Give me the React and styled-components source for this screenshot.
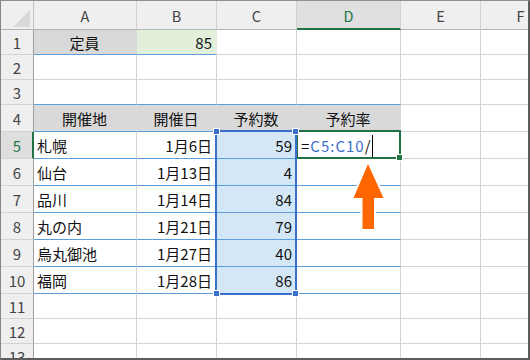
import React from "react";
import styled, { createGlobalStyle } from "styled-components";

const GlobalStyle = createGlobalStyle`
  html, body { margin: 0; padding: 0; background: #ffffff; }
  body { font-family: "Noto Sans CJK JP", "Noto Sans", sans-serif; }
`;

const GRID = "#d4d4d4";
const BLUE_LINE = "#5b9fdc";
const GREEN = "#217346";
const REF_BLUE = "#3a70cc";

const Frame = styled.div`
  width: 530px;
  height: 360px;
  box-sizing: border-box;
  border-top: 1px solid #8f8f8f;
  border-left: 1px solid #858585;
  border-right: 2px solid #5c5c5c;
  border-bottom: 2px solid #5c5c5c;
  overflow: hidden;
  background: #fff;
`;

const Sheet = styled.div`
  position: relative;
  display: grid;
  grid-template-columns: 33px 103px 80px 80px 104px 80px 80px;
  grid-template-rows: 29px 25px 25px 25px repeat(7, 27px) 25px 25px 25px;
  font-family: "Noto Sans CJK JP", "Noto Sans", sans-serif;
`;

const Corner = styled.div`
  position: relative;
  background: #efefef;
  border-right: 1px solid #c4c4c4;
  border-bottom: 1px solid #b4b4b4;
  box-sizing: border-box;
  svg { position: absolute; right: 3px; bottom: 2px; }
`;

const ColHeader = styled.div`
  box-sizing: border-box;
  display: flex;
  align-items: center;
  justify-content: center;
  background: ${(p) => (p.$active ? "#e0e0e0" : "#efefef")};
  border-right: 1px solid #d2d2d2;
  border-bottom: ${(p) => (p.$active ? `2px solid ${GREEN}` : "1px solid #b4b4b4")};
  color: ${(p) => (p.$active ? GREEN : "#444")};
  font-size: 14.5px;
  padding-top: ${(p) => (p.$active ? "1px" : "0")};
`;

const RowHeader = styled.div`
  box-sizing: border-box;
  display: flex;
  align-items: center;
  justify-content: center;
  background: ${(p) => (p.$active ? "#dedede" : "#efefef")};
  border-right: ${(p) => (p.$active ? `2px solid ${GREEN}` : "1px solid #9e9e9e")};
  border-bottom: 1px solid #d2d2d2;
  color: ${(p) => (p.$active ? GREEN : "#444")};
  font-size: 15px;
  padding-left: ${(p) => (p.$active ? "1px" : "0")};
`;

const Cell = styled.div`
  box-sizing: border-box;
  display: flex;
  align-items: center;
  justify-content: ${(p) =>
    p.$align === "right" ? "flex-end" : p.$align === "center" ? "center" : "flex-start"};
  padding: 1px 4px 0 3px;
  background: ${(p) => p.$bg || "#fff"};
  border-right: 1px solid ${(p) => p.$bg || GRID};
  border-bottom: 1px solid ${(p) => (p.$blue ? BLUE_LINE : p.$bg || GRID)};
  font-size: 15px;
  color: #111;
  white-space: nowrap;
  overflow: visible;
`;

const Formula = styled.span`
  display: flex;
  align-items: center;
  letter-spacing: 1px;
  font-size: 15px;
  color: #111;
  padding-left: 1px;
`;

const Ref = styled.span`
  color: ${REF_BLUE};
`;

const Caret = styled.span`
  display: inline-block;
  width: 1px;
  height: 22px;
  background: #000;
  margin-left: 0px;
`;

const RangeBox = styled.div`
  position: absolute;
  left: 214px;
  top: 129px;
  width: 82px;
  height: 165px;
  box-sizing: border-box;
  border: 2px solid ${REF_BLUE};
  pointer-events: none;
`;

const Handle = styled.span`
  position: absolute;
  width: 5px;
  height: 5px;
  background: ${(p) => p.$color};
  border: 1px solid #fff;
  ${(p) => (p.$x === "l" ? "left: -4px;" : "right: -4px;")}
  ${(p) => (p.$y === "t" ? "top: -4px;" : "bottom: -4px;")}
`;

const ActiveBox = styled.div`
  position: absolute;
  left: 295px;
  top: 129px;
  width: 105px;
  height: 29px;
  box-sizing: border-box;
  border: 2px solid ${GREEN};
  pointer-events: none;
`;

const FillHandle = styled.span`
  position: absolute;
  right: -4px;
  bottom: -4px;
  width: 5px;
  height: 5px;
  background: ${GREEN};
  border: 1px solid #fff;
`;

const Arrow = styled.svg`
  position: absolute;
  left: 349px;
  top: 159px;
  overflow: visible;
`;

const cols = ["A", "B", "C", "D", "E", "F"];

const data = [
  ["札幌", "1月6日", "59"],
  ["仙台", "1月13日", "4"],
  ["品川", "1月14日", "84"],
  ["丸の内", "1月21日", "79"],
  ["烏丸御池", "1月27日", "40"],
  ["福岡", "1月28日", "86"],
];

const GRAY = "#d9d9d9";
const GREENFILL = "#e2efda";
const BLUEFILL = "#d3e7f6";

function EmptyRow({ n, blueCols = [] }) {
  return (
    <>
      <RowHeader>{n}</RowHeader>
      {cols.map((c, i) => (
        <Cell key={c} $blue={blueCols.includes(i)} />
      ))}
    </>
  );
}

export default function App() {
  return (
    <>
      <GlobalStyle />
      <Frame>
        <Sheet>
          <Corner>
            <svg width="17" height="17" viewBox="0 0 17 17">
              <polygon points="17,0 17,17 0,17" fill="#d9d9d9" />
            </svg>
          </Corner>
          {cols.map((c) => (
            <ColHeader key={c} $active={c === "D"}>
              {c}
            </ColHeader>
          ))}

          <RowHeader>1</RowHeader>
          <Cell $bg={GRAY} $blue $align="center">定員</Cell>
          <Cell $bg={GREENFILL} $blue $align="right">85</Cell>
          <Cell />
          <Cell />
          <Cell />
          <Cell />

          <EmptyRow n={2} />
          <EmptyRow n={3} blueCols={[0, 1, 2, 3]} />

          <RowHeader>4</RowHeader>
          {["開催地", "開催日", "予約数", "予約率"].map((t) => (
            <Cell key={t} $bg={GRAY} $blue $align="center">
              {t}
            </Cell>
          ))}
          <Cell />
          <Cell />

          {data.map(([place, date, num], i) => (
            <React.Fragment key={place}>
              <RowHeader $active={i === 0}>{i + 5}</RowHeader>
              <Cell $blue>{place}</Cell>
              <Cell $blue $align="right">{date}</Cell>
              <Cell $blue $bg={BLUEFILL} $align="right">{num}</Cell>
              <Cell $blue>
                {i === 0 && (
                  <Formula>
                    =<Ref>C5:C10</Ref>/<Caret />
                  </Formula>
                )}
              </Cell>
              <Cell />
              <Cell />
            </React.Fragment>
          ))}

          <EmptyRow n={11} />
          <EmptyRow n={12} />
          <EmptyRow n={13} />

          <ActiveBox>
            <FillHandle />
          </ActiveBox>
          <RangeBox>
            <Handle $color={REF_BLUE} $x="l" $y="t" />
            <Handle $color={REF_BLUE} $x="r" $y="t" />
            <Handle $color={REF_BLUE} $x="l" $y="b" />
            <Handle $color={REF_BLUE} $x="r" $y="b" />
          </RangeBox>
          <Arrow width="36" height="72" viewBox="0 0 36 72">
            <polygon
              points="18,4 33.5,38 24,38 24,69 12.5,69 12.5,38 3.5,38"
              fill="#ff6600"
              stroke="#ffffff"
              strokeWidth="4"
              strokeLinejoin="miter"
              paintOrder="stroke"
            />
          </Arrow>
        </Sheet>
      </Frame>
    </>
  );
}
